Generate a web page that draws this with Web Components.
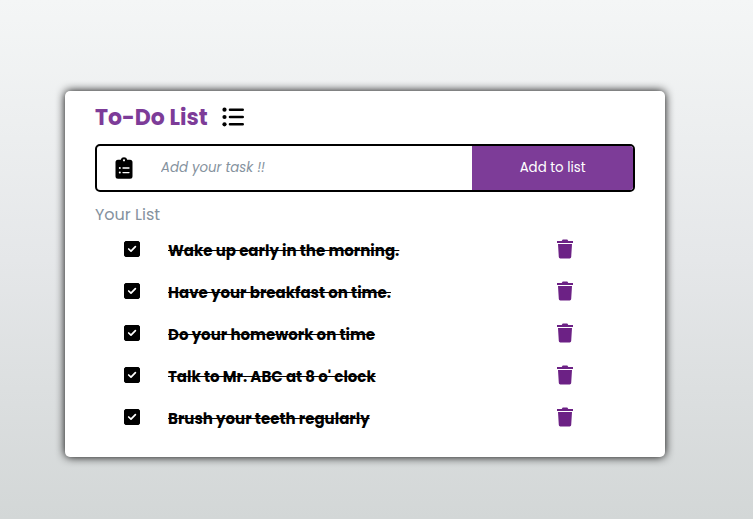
<!DOCTYPE html>
<html lang="en">
<head>
<meta charset="utf-8">
<meta name="viewport" content="width=device-width, initial-scale=1">
<title>To-Do List</title>
<style>
  html { height: 100%; }
  body {
    margin: 0;
    min-height: 100%;
    font-family: Poppins, Inter, "Liberation Sans", sans-serif;
    background: linear-gradient(#f4f6f6, #e5e7e9 50%, #d3d7d7);
  }
</style>
</head>
<body>
<todo-app>
  <todo-item>Wake up early in the morning.</todo-item>
  <todo-item>Have your breakfast on time.</todo-item>
  <todo-item>Do your homework on time</todo-item>
  <todo-item>Talk to Mr. ABC at 8 o' clock</todo-item>
  <todo-item>Brush your teeth regularly</todo-item>
</todo-app>

<template id="app-template">
  <style>
    :host { display: block; box-sizing: border-box; padding: 91px 88px 62px 65px; }
    main {
      box-sizing: border-box;
      max-width: 600px;
      padding: 10px 30px 18px;
      background: #fff;
      border-radius: 5px;
      box-shadow: 0 0 10px #000;
    }
    header { display: flex; align-items: center; gap: 14px; height: 34px; }
    h1 { margin: 0; font-size: 22px; line-height: 34px; font-weight: 700; color: #7d3c98; }
    header svg { width: 22px; height: 20px; margin-bottom: 2px; }
    h2 { margin: 11px 0 2px; font-size: 16px; line-height: 24px; font-weight: 400; color: #85929e; }
    .items { display: grid; grid-auto-rows: 42px; }
  </style>
  <main>
    <header>
      <h1>To-Do List</h1>
      <svg viewBox="0 0 22 20" aria-hidden="true">
        <circle cx="2.5" cy="2.7" r="2.1"/><circle cx="2.5" cy="10" r="2.1"/><circle cx="2.5" cy="17.3" r="2.1"/>
        <path d="M8 2.7h12.700M8 10h12.700M8 17.300h12.700" fill="none" stroke="#000" stroke-width="2.6" stroke-linecap="round"/>
      </svg>
    </header>
    <todo-form></todo-form>
    <h2>Your List</h2>
    <div class="items"><slot></slot></div>
  </main>
</template>

<template id="form-template">
  <style>
    :host { display: block; margin-top: 9px; }
    form {
      display: grid;
      grid-template-columns: 7fr 3fr;
      height: 44px;
      border: 2px solid #000;
      border-radius: 5px;
      overflow: hidden;
    }
    label { display: flex; align-items: center; padding-left: 18px; min-width: 0; }
    svg { flex: none; width: 18px; height: 22px; margin-right: 28px; }
    input {
      flex: 1;
      min-width: 0;
      padding: 0;
      border: 0;
      outline: 0;
      background: none;
      font-family: inherit;
    }
    input::placeholder { color: #85929e; font-style: italic; opacity: 1; }
    button { border: 0; padding: 0; background: #7d3c98; color: #fff; font-family: inherit; cursor: pointer; }
  </style>
  <form>
    <label>
      <svg viewBox="0 0 18 22" aria-hidden="true">
        <path d="M3 2.8h2.8A3.3 3.3 0 0 1 12.2 2.8H15a2.5 2.5 0 0 1 2.500 2.500v14A2.500 2.500 0 0 1 15 21.800H3A2.500 2.500 0 0 1 .5 19.300V5.300A2.500 2.500 0 0 1 3 2.800Z"/>
        <circle cx="9" cy="3.300" r="1.100" fill="#fff"/>
        <g fill="#fff"><circle cx="4.800" cy="11" r="1"/><circle cx="4.800" cy="15.600" r="1"/></g>
        <path d="M8 11h6M8 15.600h6" stroke="#fff" stroke-width="1.300" stroke-linecap="round"/>
      </svg>
      <input type="text" placeholder="Add your task !!" aria-label="Add your task">
    </label>
    <button type="submit">Add to list</button>
  </form>
</template>

<template id="item-template">
  <style>
    :host { display: grid; grid-template-columns: 1fr 140px; align-items: center; padding-left: 29px; }
    label { display: flex; align-items: center; gap: 28px; font-size: 15px; line-height: 24px; font-weight: 700; color: #000; }
    .box { flex: none; display: grid; width: 16px; height: 16px; margin-bottom: 2px; }
    .box > * { grid-area: 1 / 1; width: 16px; height: 16px; margin: 0; }
    input { appearance: none; background: #fff; border: 1px solid #000; border-radius: 2px; box-sizing: border-box; }
    input:checked { background: #000; }
    .box svg { visibility: hidden; pointer-events: none; z-index: 1; }
    input:checked + svg { visibility: visible; }
    .text { padding-top: 2px; text-decoration: line-through; text-decoration-skip-ink: none; }
    button { justify-self: start; display: block; margin: 0 0 2px 62px; padding: 0; border: 0; background: none; color: #6c2185; cursor: pointer; }
    button svg { display: block; width: 16px; height: 20px; }
  </style>
  <label>
    <span class="box">
      <input type="checkbox" checked>
      <svg viewBox="0 0 16 16" aria-hidden="true"><path d="M4.700 8 7 10.200l4.400-4.600" fill="none" stroke="#fff" stroke-width="1.700" stroke-linecap="round" stroke-linejoin="round"/></svg>
    </span>
    <span class="text"><slot></slot></span>
  </label>
  <button type="button" aria-label="Delete task">
    <svg viewBox="0 0 16 20" fill="currentColor" aria-hidden="true">
      <path d="M0 2h4.700L5.700.500h4.600l1 1.500H16V4H0Z"/>
      <path d="M1 5h14l-.8 13a1.500 1.500 0 0 1-1.500 1.400H3.300a1.500 1.500 0 0 1-1.500-1.400Z"/>
    </svg>
  </button>
</template>

<script>
  class TemplateElement extends HTMLElement {
    constructor() {
      super();
      const template = document.getElementById(this.constructor.templateId);
      this.attachShadow({ mode: "open" }).append(template.content.cloneNode(true));
    }
  }
  class TodoItem extends TemplateElement {
    static templateId = "item-template";
    constructor() {
      super();
      this.shadowRoot.querySelector("button").addEventListener("click", () => this.remove());
      const box = this.shadowRoot.querySelector("input");
      box.addEventListener("change", () => {
        this.shadowRoot.querySelector(".text").style.textDecorationLine = box.checked ? "" : "none";
      });
    }
  }
  class TodoForm extends TemplateElement {
    static templateId = "form-template";
    constructor() {
      super();
      this.shadowRoot.querySelector("form").addEventListener("submit", (event) => {
        event.preventDefault();
        const field = this.shadowRoot.querySelector("input");
        const task = field.value.trim();
        if (!task) return;
        this.dispatchEvent(new CustomEvent("add-task", { detail: task }));
        field.value = "";
      });
    }
  }
  class TodoApp extends TemplateElement {
    static templateId = "app-template";
    constructor() {
      super();
      this.shadowRoot.querySelector("todo-form").addEventListener("add-task", (event) => {
        const item = document.createElement("todo-item");
        item.textContent = event.detail;
        this.append(item);
      });
    }
  }
  customElements.define("todo-item", TodoItem);
  customElements.define("todo-form", TodoForm);
  customElements.define("todo-app", TodoApp);
</script>
</body>
</html>
